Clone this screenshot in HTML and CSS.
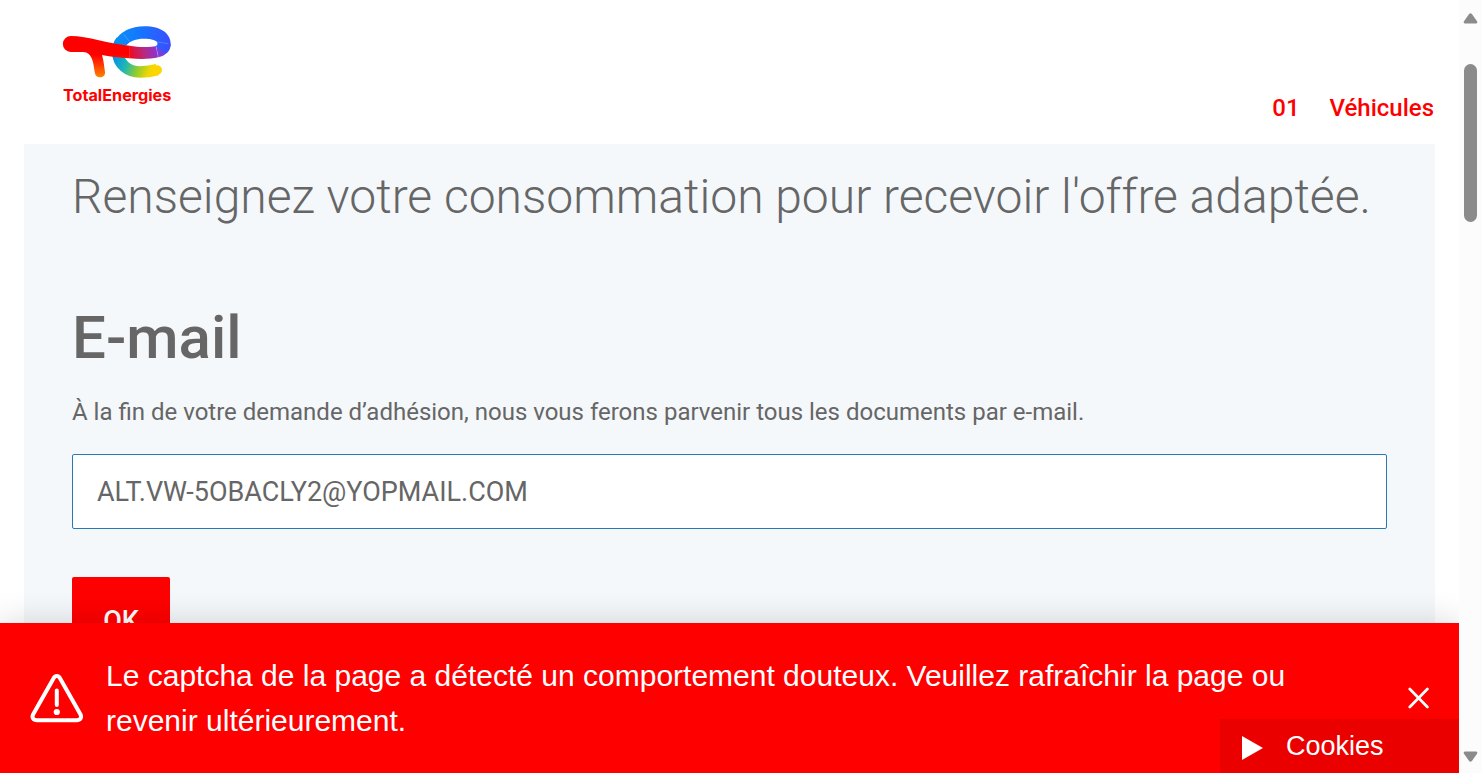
FILE: index.html
```html
<!DOCTYPE html>
<html lang="fr">
<head>
<meta charset="utf-8">
<title>TotalEnergies</title>
<link rel="stylesheet" href="styles.css">
</head>
<body>
<div class="viewport">
  <div class="page">
    <header class="header">
      <svg class="logo" viewBox="0 0 420 300" role="img" aria-label="TotalEnergies">
        <defs>
          <linearGradient id="lower" gradientUnits="userSpaceOnUse" x1="195" y1="115" x2="330" y2="165">
            <stop offset="0" stop-color="#0090f0"/><stop offset=".3" stop-color="#20b8b0"/><stop offset=".55" stop-color="#90cc30"/><stop offset=".8" stop-color="#f0d800"/><stop offset="1" stop-color="#ffd500"/>
          </linearGradient>
          <linearGradient id="upper" gradientUnits="userSpaceOnUse" x1="200" y1="0" x2="360" y2="0">
            <stop offset="0" stop-color="#0a8ff5"/><stop offset=".4" stop-color="#1478ff"/><stop offset="1" stop-color="#3850ff"/>
          </linearGradient>
          <linearGradient id="middle" gradientUnits="userSpaceOnUse" x1="236" y1="120" x2="348" y2="95">
            <stop offset="0" stop-color="#f00818"/><stop offset=".4" stop-color="#b82880"/><stop offset=".75" stop-color="#8a35d0"/><stop offset="1" stop-color="#4a48f8"/>
          </linearGradient>
          <linearGradient id="tee" gradientUnits="userSpaceOnUse" x1="0" y1="120" x2="0" y2="188">
            <stop offset="0" stop-color="#ff0000"/><stop offset="1" stop-color="#ff8500"/>
          </linearGradient>
        </defs>
        <path d="M214 78C204 90 204 99 204 112C204 148 235 171 270 171C291 171 308 168 322 164" fill="none" stroke="url(#lower)" stroke-width="35"/>
        <circle cx="322" cy="165" r="14" fill="#ffd500"/>
        <path d="M238 92C265 97 301 97 318 93L325 127C302 133 268 133 238 130Z" fill="url(#middle)"/>
        <path d="M318 93C325 90 325 87 325 83L362 86C362 107 348 121 325 127Z" fill="#7440e0"/>
        <path d="M194 80C210 49 244 34 283 34C335 34 362 57 362 87C362 99 357 109 349 115L318 94C329 85 321 72 287 71C260 70 240 77 229 91Z" fill="url(#upper)"/>
        <path d="M221 58L239 80M318 80L355 86M318 94L325 127" stroke="#fff" stroke-opacity=".4" stroke-width="1.5"/>
        <path d="M63 63C110 63 180 87 239 92V130C205 128 176 124 156 120C161 137 163 156 165 172C166 181 159 187 150 187C142 187 136 183 135 175C130 145 128 112 99 111H62A24 24 0 0 1 63 63Z" fill="url(#tee)"/>
        <text class="logo-name" x="39" y="257" textLength="325" lengthAdjust="spacingAndGlyphs">TotalEnergies</text>
      </svg>
      <nav class="steps"><span>01</span><span>Véhicules</span></nav>
    </header>
    <main class="panel">
      <h1 class="title">Renseignez votre consommation pour recevoir l'offre adaptée.</h1>
      <h2 class="subtitle">E-mail</h2>
      <p class="description">À la fin de votre demande d’adhésion, nous vous ferons parvenir tous les documents par e-mail.</p>
      <div class="field"><span class="field-text">ALT.VW-5OBACLY2@YOPMAIL.COM</span></div>
      <button class="submit" type="button">OK</button>
    </main>
    <div class="alert" role="alert">
      <svg class="warning" viewBox="0 0 54 50" fill="none" stroke="#fff" stroke-width="4" stroke-linecap="round" stroke-linejoin="round">
        <path d="M23.6 4.2L3.2 40.2C1.5 43.4 3.2 46.2 7 46.2H46.6C50.4 46.2 52.1 43.4 50.4 40.2L30 4.2C28.3 1.3 25.3 1.3 23.6 4.2Z"/>
        <path d="M26.8 16.5V31"/><circle cx="26.8" cy="38" r="3.1" fill="#fff" stroke="none"/>
      </svg>
      <p class="message">Le captcha de la page a détecté un comportement douteux. Veuillez rafraîchir la page ou revenir ultérieurement.</p>
      <svg class="close" viewBox="0 0 22 22" stroke="#fff" stroke-width="2.7" stroke-linecap="round"><path d="M1.8 2L19.4 20M19.4 2L1.8 20"/></svg>
    </div>
    <div class="cookies">
      <svg class="play" viewBox="0 0 21 24"><path d="M0 0L21 12L0 24Z" fill="#fff"/></svg>
      <span>Cookies</span>
    </div>
  </div>
  <div class="scrollbar">
    <svg class="arrow" viewBox="0 0 15 11"><path d="M6.1 1.1Q7.5-.5 8.9 1.1L14 8.3Q15 10.5 12.7 10.5H2.3Q0 10.5 1 8.3Z" fill="#8b8b8b"/></svg>
    <div class="thumb"></div>
    <svg class="arrow down" viewBox="0 0 15 11"><path d="M6.1 1.1Q7.5-.5 8.9 1.1L14 8.3Q15 10.5 12.7 10.5H2.3Q0 10.5 1 8.3Z" fill="#8b8b8b"/></svg>
  </div>
</div>
</body>
</html>
```

FILE: styles.css
```css
* { box-sizing: border-box; }
body { margin: 0; font-family: Roboto, sans-serif; color: #666; background: #fff; }
.viewport { display: flex; height: 773px; overflow: hidden; }
.page { position: relative; width: 1459px; height: 773px; padding: 0 24px; overflow: hidden; }
.header { display: flex; justify-content: space-between; height: 144px; padding: 15px 1px 0 26px; }
.logo { width: 140px; height: 100px; }
.logo-name { font: 700 46px Inter, sans-serif; fill: #f00; }
.steps { display: flex; gap: 30px; padding-top: 79px; color: #f00; font-size: 24px; font-weight: 500; line-height: 28px; white-space: nowrap; }
.panel { height: 660px; padding: 17px 48px 0; background: #f4f8fb; }
.title { margin: 0; font-size: 48px; font-weight: 300; line-height: 72px; white-space: nowrap; }
.subtitle { margin: 69px 0 0; font-size: 60px; font-weight: 500; line-height: 72px; }
.description { margin: 20px 0 0; font-size: 24px; line-height: 36px; white-space: nowrap; }
.field { display: flex; align-items: center; height: 75px; margin-top: 24px; padding: 1px 24px 0; border: 1px solid #287ab5; border-radius: 2px; background: #fff; font-size: 27px; }
.submit { display: block; width: 98px; height: 88px; margin-top: 48px; padding: 0; border: 0; border-radius: 2px; background: #f00; color: #fff; font: 500 27px Roboto, sans-serif; }
.alert { position: absolute; left: 0; right: 0; bottom: 0; height: 150px; display: flex; align-items: center; padding: 0 29px 0 30px; background: #f00; color: #fff; box-shadow: 0 0 32px rgba(0,0,0,.16); font-family: "Liberation Sans", Arial, sans-serif; }
.warning { flex: none; width: 54px; height: 50px; margin-top: 2px; }
.message { width: 1200px; margin: 0 0 0 22px; font-size: 30px; line-height: 45px; }
.close { width: 22px; height: 22px; margin-left: auto; }
.cookies { position: absolute; right: 0; bottom: 0; display: flex; align-items: center; gap: 23px; width: 239px; height: 54px; padding: 0 22px; background: #eb0000; color: #fff; font: 27px "Liberation Sans", Arial, sans-serif; }
.play { width: 21px; height: 24px; margin-top: 4px; }
.scrollbar { width: 23px; height: 773px; display: flex; flex-direction: column; align-items: center; padding: 13px 0 11px; background: #fcfcfc; }
.arrow { width: 15px; height: 11px; }
.thumb { width: 13px; height: 158px; margin-top: 40px; border-radius: 7px; background: #8b8b8b; }
.down { margin-top: auto; transform: rotate(180deg); }
```
